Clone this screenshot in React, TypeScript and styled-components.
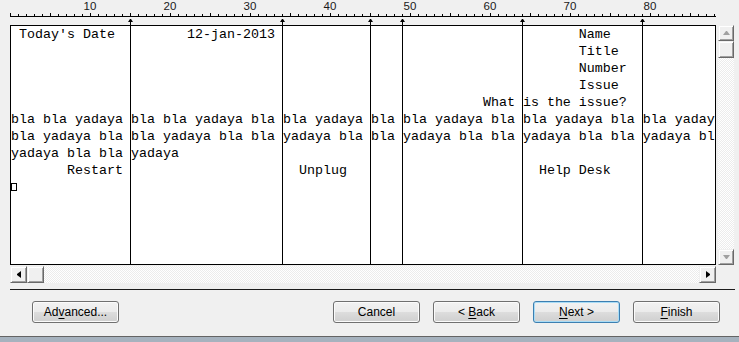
import React from 'react'
import styled, { createGlobalStyle, css } from 'styled-components'

const CHAR = 8
const COLS = 88

const GlobalStyle = createGlobalStyle`
  html, body {
    margin: 0;
    padding: 0;
    background: #f0f0f0;
  }
  body {
    width: 739px;
    height: 342px;
    overflow: hidden;
    font-family: "Liberation Sans", Arial, sans-serif;
  }
`

const Wizard = styled.div`
    width: 739px;
    height: 342px;
    display: flex;
    flex-direction: column;
`

const PreviewArea = styled.div`
    display: grid;
    grid-template-columns: 706px 16px;
    column-gap: 2px;
    padding-left: 10px;
`

const Sheet = styled.div`
    position: relative;
    height: 265px;
`

const Ruler = styled.div`
    position: relative;
    height: 25px;
`

const RulerLabel = styled.span`
    position: absolute;
    top: 0;
    width: 20px;
    text-align: center;
    font-size: 11.5px;
    line-height: 13.4px;
    color: #1a1a1a;
`

const TextBox = styled.div`
    box-sizing: border-box;
    height: 240px;
    border: 1px solid #000;
    background: #fff;
    overflow: hidden;
    font-family: "Liberation Mono", "Courier New", monospace;
    font-size: 13.333px;
    line-height: 17px;
    color: #000;
`

const Line = styled.div`
    height: 17px;
    white-space: pre;
`

const CtrlBox = styled.span`
    display: inline-block;
    width: 4px;
    height: 6px;
    border: 1px solid #000;
`

const BreakMarker = styled.div`
    position: absolute;
    top: 22px;
    bottom: 1px;
    width: 1px;
    background: #000;

    &::before {
        content: '';
        position: absolute;
        top: -3px;
        left: -2px;
        width: 1px;
        border-left: 2px solid transparent;
        border-right: 2px solid transparent;
        border-bottom: 3px solid #000;
    }
`

const checker = css`
    background: repeating-conic-gradient(#ffffff 0 25%, #ececec 0 50%) 0 0 / 2px 2px;
`

const VScroll = styled.div`
    align-self: end;
    height: 240px;
    display: flex;
    flex-direction: column;
    ${checker}
`

const HScroll = styled.div`
    margin-top: 1px;
    height: 17px;
    display: flex;
    ${checker}
`

const Track = styled.div`
    flex: 1;
`

const Thumb = styled.div<{ $vertical?: boolean }>`
    box-sizing: border-box;
    width: ${p => (p.$vertical ? '16px' : '17px')};
    height: 17px;
    background: #f0f0f0;
    border: 1px solid;
    border-color: #f0f0f0 #696969 #696969 #f0f0f0;
    box-shadow: inset 1px 1px #fff, inset -1px -1px #a0a0a0;
`

type Dir = 'up' | 'down' | 'left' | 'right'

const arrowShape = (dir: Dir, color: string) => {
    switch (dir) {
        case 'up':
            return `width: 1px; border-left: 3px solid transparent; border-right: 3px solid transparent; border-bottom: 4px solid ${color};`
        case 'down':
            return `width: 1px; border-left: 3px solid transparent; border-right: 3px solid transparent; border-top: 4px solid ${color};`
        case 'left':
            return `height: 1px; border-top: 3px solid transparent; border-bottom: 3px solid transparent; border-right: 4px solid ${color};`
        case 'right':
            return `height: 1px; border-top: 3px solid transparent; border-bottom: 3px solid transparent; border-left: 4px solid ${color};`
    }
}

const ScrollButton = styled(Thumb)<{ $dir: Dir; $disabled?: boolean }>`
    height: ${p => (p.$vertical ? '16px' : '17px')};
    display: flex;
    align-items: center;
    justify-content: center;

    &::after {
        content: '';
        ${p => arrowShape(p.$dir, p.$disabled ? '#a0a0a0' : '#000')}
    }
`

const Separator = styled.div`
    margin: 6px 4px 0 10px;
    height: 1px;
    background: #1c1c1c;
`

const ButtonBar = styled.div`
    display: flex;
    gap: 13px;
    margin-top: 11px;
    padding: 0 19px 0 32px;
`

const Button = styled.button<{ $default?: boolean; $push?: boolean }>`
    box-sizing: border-box;
    width: 87px;
    height: 22px;
    padding: 0;
    margin-left: ${p => (p.$push ? 'auto' : '0')};
    border: 1px solid ${p => (p.$default ? '#3c7fb1' : '#707070')};
    border-radius: 3px;
    background: linear-gradient(#f2f2f2 0%, #ebebeb 50%, #dddddd 50%, #cfcfcf 100%);
    box-shadow: inset 0 0 0 1px ${p => (p.$default ? '#a9dcf6' : '#fbfbfb')};
    font-family: "Liberation Sans", Arial, sans-serif;
    font-size: 12px;
    color: #000;

    u {
        text-decoration: underline;
        text-underline-offset: 2px;
    }
`

const BottomEdge = styled.div`
    margin-top: 13px;
    flex: 1;
    border-top: 1px solid #646464;
    background: #a6b2be;
`

type Part = [number, string]

const rows: Part[][] = [
    [[1, "Today's Date"], [22, '12-jan-2013'], [71, 'Name']],
    [[71, 'Title']],
    [[71, 'Number']],
    [[71, 'Issue']],
    [[59, 'What is the issue?']],
    [[0, 'bla bla yadaya '.repeat(7)]],
    [[0, 'bla yadaya bla '.repeat(7)]],
    [[0, 'yadaya bla bla yadaya']],
    [[7, 'Restart'], [36, 'Unplug'], [66, 'Help Desk']],
]

const breaks = [15, 34, 45, 49, 64, 79]

const layout = (parts: Part[]) =>
    parts.reduce((line, [col, text]) => line.padEnd(col, ' ') + text, '')

const RulerTicks = () => (
    <svg width={706} height={25} style={{ display: 'block' }}>
        <rect x={0} y={16} width={706} height={1} fill="#000" />
        {Array.from({ length: COLS + 1 }, (_, i) => (
            <rect
                key={i}
                x={i * CHAR}
                y={i % 5 === 0 ? 13 : 14}
                width={1}
                height={i % 5 === 0 ? 3 : 2}
                fill="#000"
            />
        ))}
    </svg>
)

const App: React.FC = () => {
    return (
        <>
            <GlobalStyle />
            <Wizard>
                <PreviewArea>
                    <Sheet>
                        <Ruler>
                            <RulerTicks />
                            {[1, 2, 3, 4, 5, 6, 7, 8].map(n => (
                                <RulerLabel key={n} style={{ left: n * 10 * CHAR - 10 }}>
                                    {n * 10}
                                </RulerLabel>
                            ))}
                        </Ruler>
                        <TextBox>
                            {rows.map((parts, i) => (
                                <Line key={i}>{layout(parts)}</Line>
                            ))}
                            <Line><CtrlBox /></Line>
                        </TextBox>
                        {breaks.map(col => (
                            <BreakMarker key={col} style={{ left: col * CHAR }} />
                        ))}
                    </Sheet>
                    <VScroll>
                        <ScrollButton $vertical $dir="up" $disabled />
                        <Thumb $vertical />
                        <Track />
                        <ScrollButton $vertical $dir="down" $disabled />
                    </VScroll>
                    <HScroll>
                        <ScrollButton $dir="left" />
                        <Thumb />
                        <Track />
                        <ScrollButton $dir="right" />
                    </HScroll>
                </PreviewArea>
                <Separator />
                <ButtonBar>
                    <Button>Ad<u>v</u>anced...</Button>
                    <Button $push>Cancel</Button>
                    <Button>&lt; <u>B</u>ack</Button>
                    <Button $default><u>N</u>ext &gt;</Button>
                    <Button><u>F</u>inish</Button>
                </ButtonBar>
                <BottomEdge />
            </Wizard>
        </>
    )
}

export default App
